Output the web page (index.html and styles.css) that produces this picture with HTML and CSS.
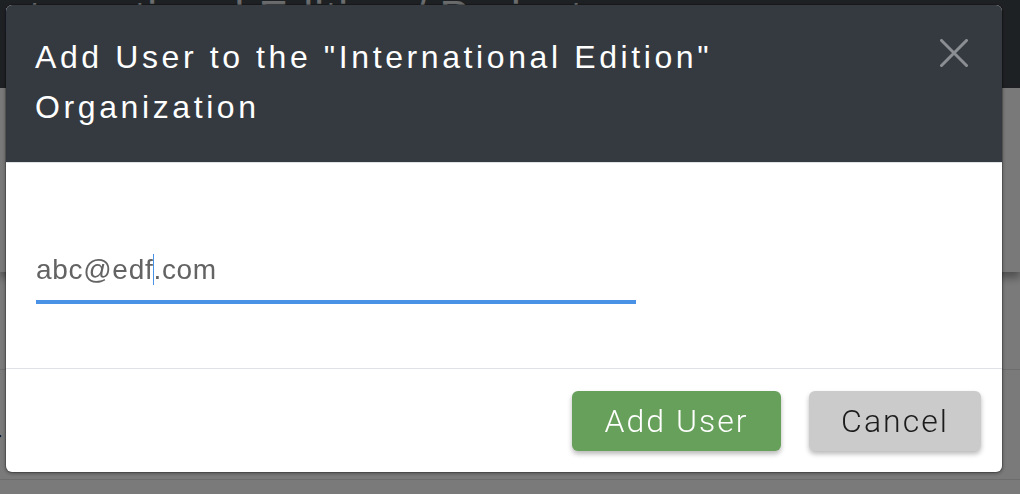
FILE: index.html
```html
<!DOCTYPE html>
<html lang="en">
<head>
<meta charset="utf-8">
<title>Add User</title>
<link rel="stylesheet" href="styles.css">
</head>
<body>
  <div class="page">
    <nav class="topbar">
      <h1 class="crumb">International Edition / Projects</h1>
    </nav>
    <section class="toolbar"></section>
    <div class="row"></div>
    <div class="row"><span class="cell">Member</span></div>
  </div>

  <div class="backdrop"></div>

  <div class="modal" role="dialog" aria-labelledby="modal-title">
    <header class="modal-header">
      <h2 class="modal-title" id="modal-title">Add User to the "International Edition" Organization</h2>
      <button class="close" type="button" aria-label="Close">
        <svg width="28" height="28" viewBox="0 0 28 28" aria-hidden="true">
          <path d="M1.5 1.5 L26.5 26.5 M26.5 1.5 L1.5 26.5" stroke="#8b8e92" stroke-width="3" stroke-linecap="square" fill="none"/>
        </svg>
      </button>
    </header>
    <div class="modal-body">
      <div class="email-field" role="textbox" aria-label="Email">abc@edf<span class="caret"></span>.com</div>
    </div>
    <footer class="modal-footer">
      <button class="btn btn-add" type="button">Add User</button>
      <button class="btn btn-cancel" type="button">Cancel</button>
    </footer>
  </div>
</body>
</html>
```

FILE: styles.css
```css
* {
  box-sizing: border-box;
}

html, body {
  margin: 0;
  padding: 0;
  height: 100%;
}

body {
  font-family: "Liberation Sans", Arial, sans-serif;
  background: #ffffff;
  overflow: hidden;
}

/* ---------- underlying page ---------- */
.page {
  height: 494px;
  overflow: hidden;
}

.topbar {
  height: 88px;
  background: #40454b;
  overflow: hidden;
}

.crumb {
  margin: 0;
  margin-left: -10px;
  padding-top: 0;
  font-size: 44px;
  line-height: 34px;
  font-weight: 400;
  color: #dfe2e5;
  white-space: nowrap;
  letter-spacing: 1px;
}

.toolbar {
  height: 184px;
  background: #fcfcfc;
  box-shadow: 0 6px 8px rgba(0, 0, 0, 0.35);
  position: relative;
}

.row {
  height: 98px;
  border-bottom: 1px solid #e4e4e4;
  background: #ffffff;
  display: flex;
  align-items: center;
  overflow: hidden;
}

.row + .row {
  height: 110px;
}

.cell {
  margin-left: -94px;
  margin-top: 32px;
  font-size: 26px;
  color: #222;
}

.backdrop {
  position: fixed;
  inset: 0;
  background: rgba(0, 0, 0, 0.52);
}

/* ---------- modal ---------- */
.modal {
  position: fixed;
  left: 6px;
  top: 5px;
  width: 996px;
  background: #ffffff;
  border-radius: 6px;
  overflow: hidden;
  box-shadow: 0 0 0 1px rgba(0, 0, 0, 0.18), 0 1px 4px rgba(0, 0, 0, 0.45);
}

.modal-header {
  display: flex;
  align-items: flex-start;
  justify-content: space-between;
  background: #343a40;
  padding: 27px 34px 30px 29px;
  border-bottom: 1px solid #dee2e6;
}

.modal-title {
  margin: 0;
  max-width: 760px;
  font-size: 32px;
  line-height: 50px;
  font-weight: 400;
  letter-spacing: 3.6px;
  color: #ffffff;
}

.close {
  margin: 7px 0 0;
  padding: 0;
  border: 0;
  background: transparent;
  width: 28px;
  height: 28px;
  display: block;
  cursor: pointer;
}

.close svg {
  display: block;
}

.modal-body {
  padding: 89px 30px 64px 30px;
}

.email-field {
  width: 600px;
  height: 52px;
  padding: 0 0 12px 0;
  font-size: 28px;
  line-height: 36px;
  letter-spacing: 0.7px;
  color: #636363;
  border-bottom: 4px solid #4a92e6;
  white-space: nowrap;
}

.caret {
  display: inline-block;
  width: 1.5px;
  height: 31px;
  margin: 0 -0.75px;
  background: #4a92e6;
  vertical-align: -6px;
}

.modal-footer {
  display: flex;
  justify-content: flex-end;
  gap: 28px;
  padding: 22px 21px 21px;
  border-top: 1px solid #dee2e6;
}

.btn {
  height: 60px;
  border: 0;
  border-radius: 6px;
  font-family: Roboto, "Liberation Sans", sans-serif;
  font-weight: 300;
  font-size: 32px;
  letter-spacing: 2px;
  display: flex;
  align-items: center;
  justify-content: center;
  box-shadow: 0 3px 5px rgba(0, 0, 0, 0.28);
  cursor: pointer;
}

.btn-add {
  width: 209px;
  background: #67a05a;
  color: #ffffff;
}

.btn-cancel {
  width: 172px;
  background: #cbcbcb;
  color: #1c1c1c;
}
```
